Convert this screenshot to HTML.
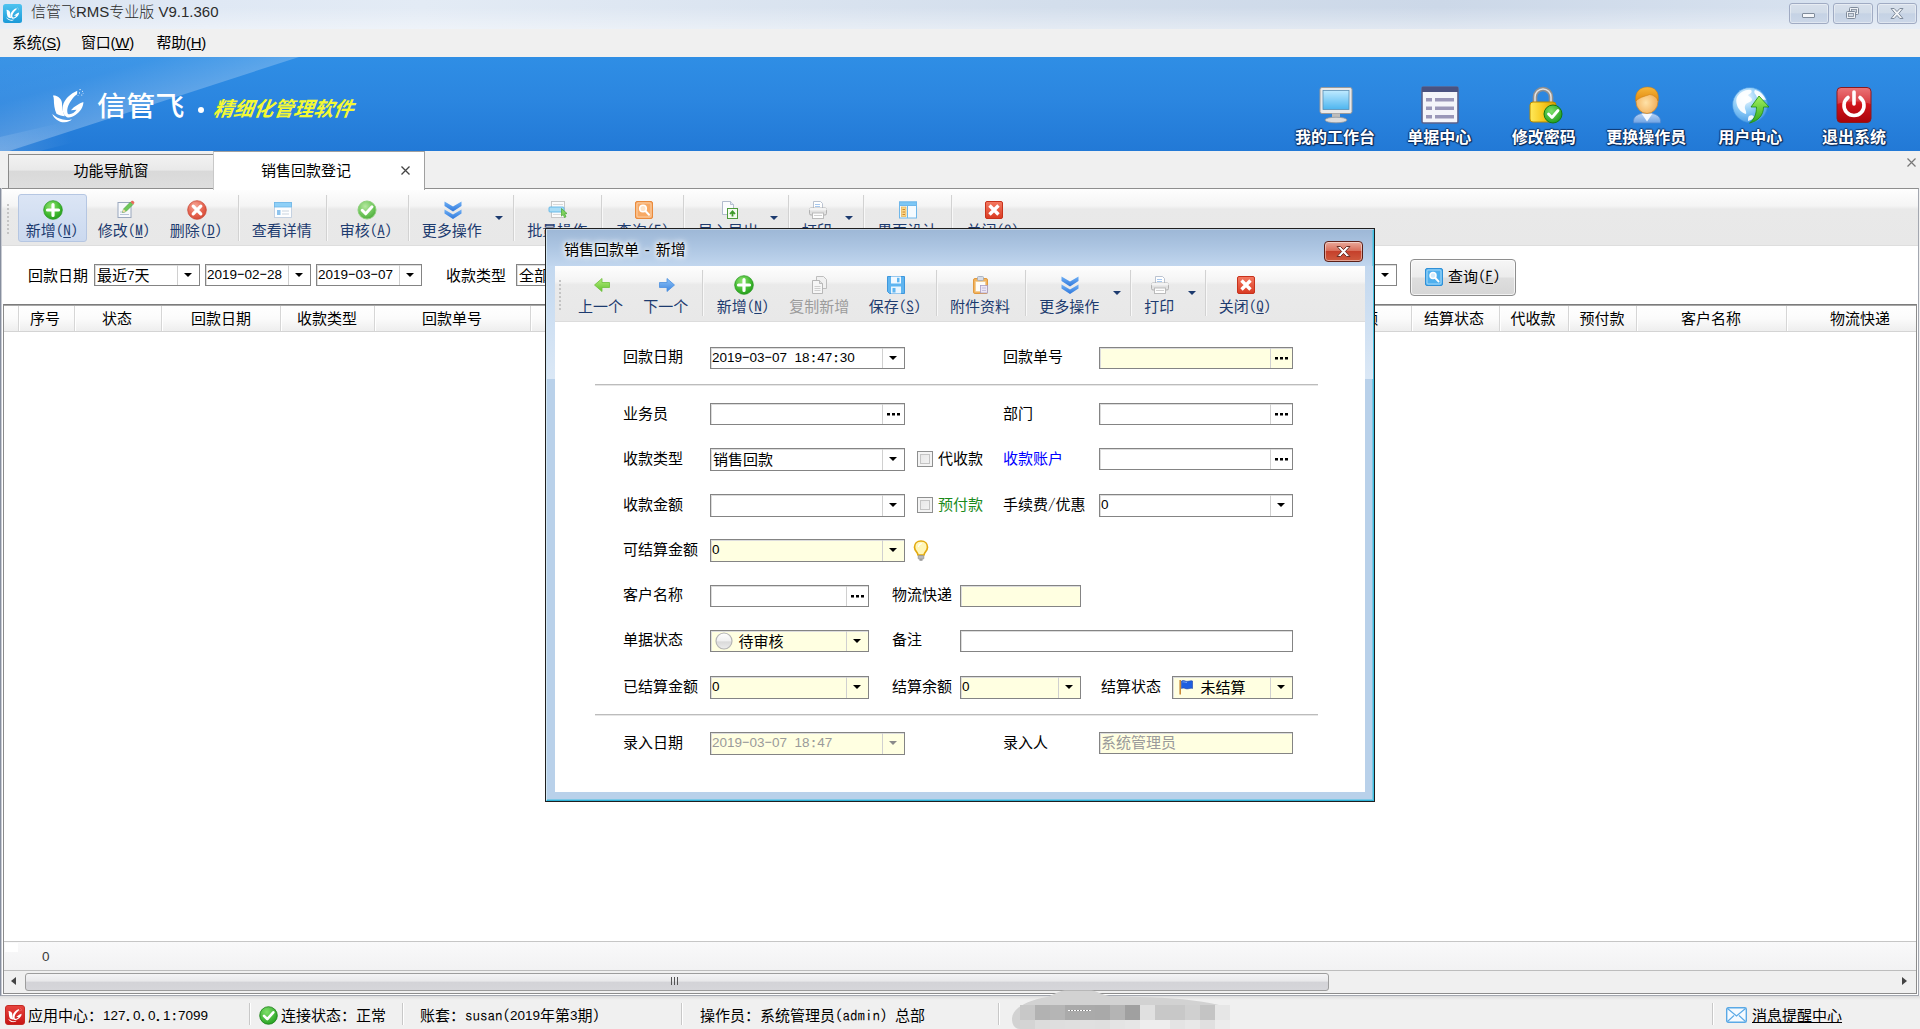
<!DOCTYPE html>
<html lang="zh-CN"><head><meta charset="utf-8"><title>信管飞RMS专业版 V9.1.360</title>
<style>
*{box-sizing:border-box;margin:0;padding:0}
html,body{width:1920px;height:1029px;overflow:hidden;background:#f0f0f0}
body{position:relative;font-family:"Liberation Sans","Noto Sans CJK SC",sans-serif;font-size:15px;color:#000;line-height:1}
.abs,.abs-c>*{position:absolute}
div,span.p,svg.p{position:absolute}
.a{font-family:"IPAGothic","Liberation Mono",monospace;font-size:15px;letter-spacing:0;position:static}
.d{font-family:"Liberation Sans",sans-serif;font-size:13.5px;position:relative;top:-1px}
.lbl{white-space:nowrap;height:20px;line-height:20px;font-size:15px}
.cj{position:relative;top:1px}
.c{text-align:center}
.tb{color:#1d3b6f}
.sep{width:1px;background:#d2d2d2;border-right:1px solid #f8f8f8;box-sizing:content-box}
.fld{border:1px solid #848484;background:#fff;height:22px;box-shadow:inset 1px 1px 0 #dcdcdc}
.fld.y{background:#ffffe1}
.fld .v{left:2px;top:0;height:20px;line-height:20.5px;white-space:nowrap;font-size:15px}
.fld .v>.a:first-child{margin-left:-1px}
.fld .btn{right:0;top:0;width:22px;height:20px;border-left:1px solid #d0d0d0}
.arr{width:0;height:0;border-left:4px solid transparent;border-right:4px solid transparent;border-top:4px solid #000}
.dots{font-weight:bold;font-size:14px;letter-spacing:0;line-height:14px;text-align:center;width:100%;top:1px;left:0}
.hc{top:0;height:27px;line-height:27px;text-align:center;font-size:15px;white-space:nowrap}
.hs{top:1px;width:1px;height:25px;background:#d6d6d6;border-right:1px solid #fff;box-sizing:content-box}
.st{top:1006.5px;height:18px;line-height:18px;white-space:nowrap;font-size:15px}
.ss{top:1003px;width:1px;height:22px;background:#c8c8c8;border-right:1px solid #fff;box-sizing:content-box}
.bl{top:128px;height:20px;line-height:20px;text-align:center;font-weight:bold;font-size:16px;color:#fff;white-space:nowrap;text-shadow:1px 1px 1px #0a2a5a,-1px 0 1px #12386e,0 -1px 1px #12386e,1px 0 1px #0a2a5a,0 1px 1px #0a2a5a}
</style></head>
<body>
<div style="left:0;top:0;width:1920px;height:29px;background:linear-gradient(90deg,#dbe5f3 0%,#e3ebf5 22%,#d3deec 55%,#ccd8e8 75%,#dae4f1 100%)"></div>
<div style="left:0;top:0;width:1920px;height:29px;background:linear-gradient(180deg,rgba(255,255,255,0) 25%,rgba(255,255,255,.4) 100%)"></div>
<svg class="p" style="left:3px;top:4px" width="20" height="20" viewBox="0 0 20 20"><defs><linearGradient id="ai" x1="0" y1="0" x2="0" y2="1"><stop offset="0" stop-color="#4fc3f0"/><stop offset="1" stop-color="#1a9ad8"/></linearGradient></defs><rect x="0" y="0" width="19" height="19" rx="2.5" fill="url(#ai)"/><svg x="3" y="2.500" width="13.500" height="14.500" viewBox="130 95 345 385" preserveAspectRatio="none"><g fill="#fff"><path d="M140 185C175 180 225 205 235 255c5 45 3 95 33 153-28-3-63-13-90-28-23-50-28-110-28-145 0-20-4-37-10-50z"/><path d="M400 135C330 165 262 225 246 295c-8 50 4 100 44 123 50 14 115-33 150-83 18-30 26-57 25-80-45 17-93 43-133 87l60-4c-22 34-62 54-92 44-18-37 0-97 35-144 17-26 37-48 63-66z"/><path d="M133 382c17 48 67 88 129 90 38-2 66-17 80-34-42 14-92 12-132-6-30-14-55-30-77-50z"/><circle cx="430" cy="122" r="7"/><circle cx="456" cy="140" r="6"/><circle cx="424" cy="158" r="6"/><circle cx="448" cy="180" r="6"/><circle cx="462" cy="162" r="5"/><circle cx="408" cy="186" r="5"/></g></svg></svg>
<div style="left:31px;top:2px;height:20px;line-height:20px;font-size:15px;color:#2b2b2b;font-weight:300;white-space:nowrap">信管飞RMS专业版 V9.1.360</div>
<div style="left:1789px;top:3px;width:40px;height:21px;border:1px solid #a0abc3;border-radius:3px;background:linear-gradient(180deg,#d8e0eb 0%,#d1dbe8 46%,#c5d2e4 52%,#cbd7e8 100%);box-shadow:inset 0 0 0 1px rgba(255,255,255,.4)"></div>
<div style="left:1833px;top:3px;width:40px;height:21px;border:1px solid #a0abc3;border-radius:3px;background:linear-gradient(180deg,#d8e0eb 0%,#d1dbe8 46%,#c5d2e4 52%,#cbd7e8 100%);box-shadow:inset 0 0 0 1px rgba(255,255,255,.4)"></div>
<div style="left:1877px;top:3px;width:40px;height:21px;border:1px solid #a0abc3;border-radius:3px;background:linear-gradient(180deg,#d8e0eb 0%,#d1dbe8 46%,#c5d2e4 52%,#cbd7e8 100%);box-shadow:inset 0 0 0 1px rgba(255,255,255,.4)"></div>
<div style="left:1802px;top:13px;width:13px;height:5px;border:1px solid #7f8b9b;border-radius:1px;background:#f4f6f9"></div>
<svg class="p" style="left:1844px;top:6px" width="18" height="15" viewBox="0 0 18 15"><rect x="5.500" y="1.500" width="9" height="7" rx="1" fill="#eef1f5" stroke="#7f8b9b"/><rect x="7.500" y="3.500" width="5" height="3" fill="#cdd6e1" stroke="#7f8b9b" stroke-width=".8"/><rect x="2.500" y="5.500" width="9" height="7" rx="1" fill="#eef1f5" stroke="#7f8b9b"/><rect x="4.500" y="7.500" width="5" height="3" fill="#cdd6e1" stroke="#7f8b9b" stroke-width=".8"/></svg>
<svg class="p" style="left:1889px;top:7px" width="16" height="13" viewBox="0 0 16 13"><path d="M2 1.500h3.200L8 4.600l2.800-3.100H14L9.800 6.500 14 11.500h-3.200L8 8.400l-2.800 3.100H2l4.200-5z" fill="#f2f4f7" stroke="#7f8b9b" stroke-width="1" stroke-linejoin="round"/></svg>
<div style="left:0;top:29px;width:1920px;height:28px;background:#f0f0f0"></div>
<div style="left:12.0px;top:33px;height:20px;line-height:20px;font-size:15px;letter-spacing:-.25px;white-space:nowrap;color:#000">系统(<u>S</u>)</div>
<div style="left:81.0px;top:33px;height:20px;line-height:20px;font-size:15px;letter-spacing:-.25px;white-space:nowrap;color:#000">窗口(<u>W</u>)</div>
<div style="left:156.5px;top:33px;height:20px;line-height:20px;font-size:15px;letter-spacing:-.25px;white-space:nowrap;color:#000">帮助(<u>H</u>)</div>
<div style="left:0;top:57px;width:1920px;height:94px;background:linear-gradient(180deg,#2f8ee5 0%,#2b86e0 45%,#2279d6 100%)"></div>
<svg class="p" style="left:0;top:57px" width="700" height="94" viewBox="0 0 700 94"><defs><linearGradient id="bg1" gradientUnits="userSpaceOnUse" x1="0" y1="0" x2="25" y2="86"><stop offset="0" stop-color="#fff" stop-opacity=".05"/><stop offset=".5" stop-color="#fff" stop-opacity=".07"/><stop offset="1" stop-color="#fff" stop-opacity=".25"/></linearGradient><linearGradient id="bg2" gradientUnits="userSpaceOnUse" x1="0" y1="94" x2="60" y2="60"><stop offset="0" stop-color="#fff" stop-opacity=".14"/><stop offset="1" stop-color="#fff" stop-opacity="0"/></linearGradient></defs><polygon points="0,0 299,0 0,97" fill="url(#bg1)"/><polygon points="0,94 0,80 130,50 250,40 40,94" fill="url(#bg2)"/></svg>
<svg class="p" style="left:52.2px;top:86.9px" width="32.300" height="36.100" viewBox="130 95 345 385" preserveAspectRatio="none"><g fill="#fff"><path d="M140 185C175 180 225 205 235 255c5 45 3 95 33 153-28-3-63-13-90-28-23-50-28-110-28-145 0-20-4-37-10-50z"/><path d="M400 135C330 165 262 225 246 295c-8 50 4 100 44 123 50 14 115-33 150-83 18-30 26-57 25-80-45 17-93 43-133 87l60-4c-22 34-62 54-92 44-18-37 0-97 35-144 17-26 37-48 63-66z"/><path d="M133 382c17 48 67 88 129 90 38-2 66-17 80-34-42 14-92 12-132-6-30-14-55-30-77-50z"/><circle cx="430" cy="122" r="7"/><circle cx="456" cy="140" r="6"/><circle cx="424" cy="158" r="6"/><circle cx="448" cy="180" r="6"/><circle cx="462" cy="162" r="5"/><circle cx="408" cy="186" r="5"/></g></svg>
<div style="left:97px;top:92px;height:30px;line-height:30px;font-size:27px;color:#fff;white-space:nowrap;font-weight:500;letter-spacing:0;transform:scaleX(1.08);transform-origin:left center;font-family:'Liberation Sans','Noto Sans CJK SC',sans-serif">信管飞</div>
<div style="left:197.5px;top:107px;width:6px;height:6px;border-radius:3px;background:#fff"></div>
<div style="left:212px;top:96px;height:26px;line-height:26px;font-size:20px;font-weight:bold;font-style:italic;color:#f4f933;white-space:nowrap;transform:skewX(-8deg);transform-origin:left bottom;letter-spacing:0">精细化管理软件</div>
<div class="bl" style="left:1275.0px;width:120px">我的工作台</div>
<div class="bl" style="left:1379.3px;width:120px">单据中心</div>
<div class="bl" style="left:1483.8px;width:120px">修改密码</div>
<div class="bl" style="left:1586.2px;width:120px">更换操作员</div>
<div class="bl" style="left:1690.2px;width:120px">用户中心</div>
<div class="bl" style="left:1794.0px;width:120px">退出系统</div>
<svg class="p" style="left:1316.7px;top:86px" width="38" height="38" viewBox="0 0 38 38"><defs><linearGradient id="m1" x1="0" y1="0" x2="0" y2="1"><stop offset="0" stop-color="#bfeaff"/><stop offset="1" stop-color="#4db5ef"/></linearGradient></defs><rect x="3" y="1.500" width="32" height="26" rx="2" fill="#e9e9e9" stroke="#9a9a9a"/><rect x="6" y="4.500" width="26" height="19" fill="url(#m1)" stroke="#5a8fb5" stroke-width=".8"/><rect x="15" y="27.500" width="8" height="4" fill="#bdbdbd"/><ellipse cx="19" cy="34" rx="11" ry="2.800" fill="#dcdcdc" stroke="#9a9a9a" stroke-width=".8"/></svg>
<svg class="p" style="left:1421.0px;top:86px" width="38" height="38" viewBox="0 0 38 38"><rect x="1" y="1" width="36" height="36" rx="1.500" fill="#f4f5fa" stroke="#5b628c" stroke-width="1.600"/><rect x="1" y="1" width="36" height="5" fill="#4a5280"/><g fill="#9a97b8"><rect x="5" y="12" width="6" height="3.500"/><rect x="14" y="12" width="19" height="3.500"/><rect x="5" y="20.500" width="6" height="3.500"/><rect x="14" y="20.500" width="19" height="3.500"/><rect x="5" y="29" width="6" height="3.500"/><rect x="14" y="29" width="19" height="3.500"/></g></svg>
<svg class="p" style="left:1526.0px;top:86px" width="38" height="38" viewBox="0 0 38 38"><defs><linearGradient id="l1" x1="0" y1="0" x2="1" y2="0"><stop offset="0" stop-color="#ffe95a"/><stop offset=".5" stop-color="#f6c91f"/><stop offset="1" stop-color="#d99a00"/></linearGradient><radialGradient id="l2" cx=".4" cy=".35" r=".7"><stop offset="0" stop-color="#7be06a"/><stop offset="1" stop-color="#1c9a1a"/></radialGradient></defs><path d="M9 18V11a8 8 0 0 1 16 0v7" fill="none" stroke="#8f8f8f" stroke-width="4.600"/><path d="M9 18V11a8 8 0 0 1 16 0v7" fill="none" stroke="#e3e3e3" stroke-width="1.500"/><rect x="4" y="16" width="26" height="20" rx="3" fill="url(#l1)" stroke="#b98a00"/><circle cx="27" cy="28" r="9" fill="url(#l2)" stroke="#147a12"/><path d="M22.500 28l3.500 3.500 6-7" fill="none" stroke="#fff" stroke-width="2.800" stroke-linecap="round" stroke-linejoin="round"/></svg>
<svg class="p" style="left:1627.7px;top:86px" width="38" height="38" viewBox="0 0 38 38"><defs><radialGradient id="u1" cx=".45" cy=".55" r=".65"><stop offset="0" stop-color="#ffe2a8"/><stop offset="1" stop-color="#f0a54a"/></radialGradient><linearGradient id="u2" x1="0" y1="0" x2="0" y2="1"><stop offset="0" stop-color="#b9d4f5"/><stop offset="1" stop-color="#6fa3e4"/></linearGradient><linearGradient id="u3" x1="0" y1="0" x2="0" y2="1"><stop offset="0" stop-color="#f7b63a"/><stop offset="1" stop-color="#e18a10"/></linearGradient></defs><path d="M5.500 37c-1-7 5-10 13.500-10s14.500 3 13.500 10z" fill="url(#u2)" stroke="#4f86cf" stroke-width=".8"/><path d="M13.500 27.500l5.500 8 5.500-8z" fill="#f6f9fe"/><ellipse cx="19" cy="15.500" rx="11" ry="12" fill="url(#u1)" stroke="#c9862f" stroke-width=".8"/><path d="M7.800 15C6.500 6 12 1 19.500 1 27 1 31.500 6 30.200 15c-1.500-3.500-4-6-8.500-6.500-3 1.500-9 2-13.900 6.500z" fill="url(#u3)" stroke="#c97a10" stroke-width=".5"/></svg>
<svg class="p" style="left:1731.7px;top:86px" width="38" height="38" viewBox="0 0 38 38"><defs><radialGradient id="g1" cx=".38" cy=".3" r=".85"><stop offset="0" stop-color="#f2faff"/><stop offset=".45" stop-color="#8ccbf7"/><stop offset="1" stop-color="#2f8ae0"/></radialGradient><linearGradient id="g2" x1="0" y1="0" x2="0" y2="1"><stop offset="0" stop-color="#a4f25f"/><stop offset="1" stop-color="#2ea81c"/></linearGradient></defs><circle cx="18" cy="19" r="17.500" fill="url(#g1)" stroke="#3b8ede" stroke-width=".6"/><path d="M5 11c3-5 9-8 14-7 2 2-1 4-3 5 1 2 4 2 4 5-2 3-6 2-7 6-1 3 2 5 1 8-4-1-8-5-9-9-1-3-1-6 0-8zM23 4c5 1 9 5 11 10-3-1-5 1-8-1-2-2-1-4-3-5-1-2-1-3 0-4zM17 30c2-1 4-1 5 1-1 2-3 3-6 4 0-2 0-4 1-5z" fill="#fff" opacity=".92"/><path d="M27 10l10 11h-5.500c0 8-5 14-14 16 5-4 7-9 7-16H19z" fill="url(#g2)" stroke="#1d8a12" stroke-width=".8" stroke-linejoin="round"/></svg>
<svg class="p" style="left:1835.3px;top:86px" width="38" height="38" viewBox="0 0 38 38"><defs><linearGradient id="p1" x1="0" y1="0" x2="0" y2="1"><stop offset="0" stop-color="#e85a5e"/><stop offset=".5" stop-color="#cf1219"/><stop offset="1" stop-color="#a9030b"/></linearGradient></defs><rect x="2" y="1.500" width="34" height="35" rx="4" fill="url(#p1)" stroke="#8a1a1e"/><path d="M2.500 18C9 14.500 29 14.500 35.500 18V6a4 4 0 0 0-4-4h-25a4 4 0 0 0-4 4z" fill="#fff" opacity=".16"/><path d="M13 11.500a10 10 0 1 0 12 0" fill="none" stroke="#fff" stroke-width="3.600" stroke-linecap="round"/><path d="M19 6v12" stroke="#fff" stroke-width="3.600" stroke-linecap="round"/></svg>
<div style="left:0;top:151px;width:1920px;height:38px;background:#f0f0f0"></div>
<div style="left:8px;top:154px;width:206px;height:34px;border:1px solid #8a8a8a;border-bottom:none;background:linear-gradient(180deg,#f2f2f2 0%,#e9e9e9 45%,#d9d9d9 50%,#dedede 100%)"></div>
<div class="lbl c" style="left:8px;top:161px;width:206px">功能导航窗</div>
<div style="left:213px;top:151px;width:212px;height:39px;border:1px solid #a0a0a0;border-bottom:none;border-left-color:#c8c8c8;background:#fff;z-index:2"></div>
<div class="lbl c" style="left:213px;top:161px;width:186px;z-index:3">销售回款登记</div>
<svg class="p" style="left:400px;top:165px;z-index:3" width="11" height="11" viewBox="0 0 11 11"><path d="M1.500 1.500l8 8M9.500 1.500l-8 8" stroke="#444" stroke-width="1.300"/></svg>
<svg class="p" style="left:1906px;top:157px" width="11" height="11" viewBox="0 0 11 11"><path d="M1.500 1.500l8 8M9.500 1.500l-8 8" stroke="#777" stroke-width="1.200"/></svg>
<div style="left:0;top:188px;width:1919px;height:808px;border:1px solid #a3a7b0;border-top-color:#8e8e8e;border-left:1px solid #868e9e;background:#fff"></div>
<div style="left:1px;top:188px;width:1px;height:807px;background:#c9ccd3"></div>
<div style="left:2px;top:189px;width:1916px;height:57px;background:linear-gradient(180deg,#fefefe 0%,#f5f5f5 30%,#e9e9e9 36%,#e8e8e8 100%);border-bottom:1px solid #dedede"></div>
<div style="left:7px;top:204px;width:2px;height:30px;background:repeating-linear-gradient(180deg,#c4c4c4 0,#c4c4c4 2px,transparent 2px,transparent 4px)"></div>
<div style="left:18px;top:194px;width:69px;height:48px;border:1px solid #b5c6e2;border-radius:3px;background:linear-gradient(180deg,#dbe5f5 0%,#cbd9ef 100%)"></div>
<svg class="p" style="left:43.0px;top:200.0px" width="20" height="20" viewBox="0 0 20 20"><defs><radialGradient id="ga1" cx=".4" cy=".3" r=".8"><stop offset="0" stop-color="#8fe36f"/><stop offset=".6" stop-color="#3fb82f"/><stop offset="1" stop-color="#1f9418"/></radialGradient></defs><circle cx="10" cy="10" r="9.300" fill="url(#ga1)" stroke="#2a9a22" stroke-width=".8"/><path d="M10 4.500v11M4.500 10h11" stroke="#fff" stroke-width="3.200" stroke-linecap="round"/></svg><div class="lbl c" style="left:7.0px;top:220.7px;width:90px;color:#1d3b6f">新增<span class="a">(</span><u><span class="a">N</span></u><span class="a">)</span></div>
<svg class="p" style="left:115.0px;top:200.0px" width="20" height="20" viewBox="0 0 20 20"><rect x="3" y="2.500" width="13" height="15" fill="#f7f9fc" stroke="#9aa7bd"/><path d="M5 14.500h9M5 12h5" stroke="#b8c4d6" stroke-width="1"/><path d="M7.500 12.500l1-3.500 7-7 2.500 2.500-7 7z" fill="#6fc85a" stroke="#4a9a3c" stroke-width=".6"/><path d="M15.500 2l2.500 2.500 1-1c.5-.5.5-1.200 0-1.700l-.8-.8c-.5-.5-1.200-.5-1.700 0z" fill="#e86a5a"/><path d="M7.500 12.500l1-3.500 2.500 2.500z" fill="#f3d9a8"/></svg><div class="lbl c" style="left:79.0px;top:220.7px;width:90px;color:#1d3b6f">修改<span class="a">(</span><u><span class="a">M</span></u><span class="a">)</span></div>
<svg class="p" style="left:187.0px;top:200.0px" width="20" height="20" viewBox="0 0 20 20"><defs><radialGradient id="gd2" cx=".4" cy=".3" r=".8"><stop offset="0" stop-color="#f7aa9a"/><stop offset=".6" stop-color="#e4604c"/><stop offset="1" stop-color="#cf4430"/></radialGradient></defs><circle cx="10" cy="10" r="9.300" fill="url(#gd2)" stroke="#c84a38" stroke-width=".8"/><path d="M6.200 6.200l7.600 7.600M13.800 6.200l-7.600 7.600" stroke="#fff" stroke-width="3.200" stroke-linecap="round"/></svg><div class="lbl c" style="left:151.0px;top:220.7px;width:90px;color:#1d3b6f">删除<span class="a">(</span><u><span class="a">D</span></u><span class="a">)</span></div>
<svg class="p" style="left:272.7px;top:200.0px" width="20" height="20" viewBox="0 0 20 20"><rect x="1.500" y="2.500" width="17" height="15" fill="#fdfeff" stroke="#b9c9dc" stroke-width=".8"/><rect x="1.500" y="2.500" width="17" height="4.500" fill="#8fd0f7" stroke="#6bb6e8" stroke-width=".8"/><rect x="4" y="10" width="3.500" height="5" fill="#8fc4ee"/><path d="M9 11h7M9 14h7" stroke="#c9d3df" stroke-width="1.200"/></svg><div class="lbl c" style="left:236.7px;top:220.7px;width:90px;color:#1d3b6f">查看详情</div>
<svg class="p" style="left:357.0px;top:200.0px" width="20" height="20" viewBox="0 0 20 20"><defs><radialGradient id="gc3" cx=".4" cy=".3" r=".8"><stop offset="0" stop-color="#b5e8a0"/><stop offset=".6" stop-color="#6cc458"/><stop offset="1" stop-color="#45a535"/></radialGradient></defs><circle cx="10" cy="10" r="9" fill="url(#gc3)" stroke="#8fd07c" stroke-width="1"/><path d="M5.200 10.300l3.500 3.500 6.300-7" fill="none" stroke="#fff" stroke-width="3" stroke-linecap="round" stroke-linejoin="round"/></svg><div class="lbl c" style="left:321.0px;top:220.7px;width:90px;color:#1d3b6f">审核<span class="a">(</span><u><span class="a">A</span></u><span class="a">)</span></div>
<svg class="p" style="left:442.7px;top:200.0px" width="20" height="20" viewBox="0 0 20 20"><defs><linearGradient id="gm4" x1="0" y1="0" x2="0" y2="1"><stop offset="0" stop-color="#6fb0f5"/><stop offset="1" stop-color="#2f78dc"/></linearGradient></defs><path d="M1.500 1.500l8.500 5 8.500-5v4.500l-8.500 5.500-8.500-5.500z" fill="url(#gm4)"/><path d="M1.500 9.500l8.500 5 8.500-5v4l-8.500 5.500-8.500-5.500z" fill="url(#gm4)"/></svg><div class="lbl c" style="left:406.7px;top:220.7px;width:90px;color:#1d3b6f">更多操作</div>
<svg class="p" style="left:548.3px;top:200.0px" width="20" height="20" viewBox="0 0 20 20"><rect x="3.500" y="1.500" width="13" height="16" fill="#fbfbfb" stroke="#c3c3c3" stroke-width=".9"/><rect x="1" y="7" width="15" height="5" rx="1" fill="#a9dcf6" stroke="#5fb4e6" stroke-width=".9"/><path d="M5 4.500h10M5 14.500h8" stroke="#d9d9d9" stroke-width="1"/><path d="M13.500 8.500l5.500 5-2.300.3 1.300 3-1.500.7-1.300-3-1.700 1.600z" fill="#7fd35e" stroke="#45a52f" stroke-width=".7" stroke-linejoin="round"/></svg><div class="lbl c" style="left:512.3px;top:220.7px;width:90px;color:#1d3b6f">批量操作</div>
<svg class="p" style="left:633.7px;top:200.0px" width="20" height="20" viewBox="0 0 20 20"><rect x="1.500" y="1.500" width="17" height="17" rx="1.500" fill="#f7a965" stroke="#e98a3c"/><rect x="3" y="3" width="14" height="14" rx="1" fill="none" stroke="#fbd0a8" stroke-width="1"/><circle cx="9" cy="8.500" r="3.300" fill="#fde3c9" stroke="#fff" stroke-width="1.500"/><path d="M11.500 11l3.500 3.700" stroke="#fff" stroke-width="2" stroke-linecap="round"/></svg><div class="lbl c" style="left:597.7px;top:220.7px;width:90px;color:#1d3b6f">查询<span class="a">(</span><u><span class="a">F</span></u><span class="a">)</span></div>
<svg class="p" style="left:719.3px;top:200.0px" width="20" height="20" viewBox="0 0 20 20"><path d="M3.500 1.500h8l3 3v10h-11z" fill="#fbfcfe" stroke="#a9b4c8" stroke-width=".9"/><path d="M11.500 1.500v3h3" fill="#e4e9f1" stroke="#a9b4c8" stroke-width=".8"/><rect x="8.500" y="8.500" width="10" height="10" fill="#f4fbf0" stroke="#4e9a3a" stroke-width="1"/><path d="M13.500 16.500v-4.500M11 14l2.500-2.700 2.500 2.700" fill="none" stroke="#3f9a2b" stroke-width="1.800"/></svg><div class="lbl c" style="left:683.3px;top:220.7px;width:90px;color:#1d3b6f">导入导出</div>
<svg class="p" style="left:807.7px;top:200.0px" width="20" height="20" viewBox="0 0 20 20"><path d="M5.500 1.500h7l2 2v5h-9z" fill="#fff" stroke="#b3bccb" stroke-width=".9"/><path d="M7 4.500h5M7 6.500h5" stroke="#a8c8ee" stroke-width="1"/><rect x="1.500" y="8" width="17" height="7" rx="1.500" fill="#e1e1e1" stroke="#aaa" stroke-width=".9"/><rect x="1.500" y="8" width="17" height="2.500" rx="1.200" fill="#f3f3f3"/><rect x="4.500" y="13" width="11" height="5.500" fill="#fdfdfd" stroke="#b5b5b5" stroke-width=".9"/><path d="M6 15.500h8" stroke="#d0d0d0" stroke-width="1"/></svg><div class="lbl c" style="left:771.7px;top:220.7px;width:90px;color:#1d3b6f">打印</div>
<svg class="p" style="left:898.3px;top:200.0px" width="20" height="20" viewBox="0 0 20 20"><rect x="1.500" y="2" width="17" height="16" fill="#f5fbff" stroke="#6fb7ea" stroke-width="1"/><rect x="1.500" y="2" width="17" height="3.500" fill="#7cc7f5" stroke="#6fb7ea" stroke-width="1"/><rect x="3.500" y="7" width="4.500" height="9.500" fill="#f9d58a" stroke="#e6b450" stroke-width=".7"/><path d="M4.500 9.500h2.500M4.500 12h2.500M4.500 14.500h2.500" stroke="#d08a2a" stroke-width="1"/><path d="M9.500 5.500v12.500" stroke="#6fb7ea" stroke-width="1"/></svg><div class="lbl c" style="left:862.3px;top:220.7px;width:90px;color:#1d3b6f">界面设计</div>
<svg class="p" style="left:983.7px;top:200.0px" width="20" height="20" viewBox="0 0 20 20"><defs><linearGradient id="gx5" x1="0" y1="0" x2="0" y2="1"><stop offset="0" stop-color="#f47a62"/><stop offset="1" stop-color="#d93a22"/></linearGradient></defs><rect x="1.500" y="1.500" width="17" height="17" rx="1.500" fill="url(#gx5)" stroke="#c7321c"/><path d="M5.500 5.500l9 9M14.500 5.500l-9 9" stroke="#fff" stroke-width="3.400" stroke-linecap="butt"/></svg><div class="lbl c" style="left:947.7px;top:220.7px;width:90px;color:#1d3b6f">关闭<span class="a">(</span><u><span class="a">Q</span></u><span class="a">)</span></div>
<div class="sep" style="left:238px;top:195px;height:46px"></div>
<div class="sep" style="left:326px;top:195px;height:46px"></div>
<div class="sep" style="left:408px;top:195px;height:46px"></div>
<div class="sep" style="left:513px;top:195px;height:46px"></div>
<div class="sep" style="left:601px;top:195px;height:46px"></div>
<div class="sep" style="left:683px;top:195px;height:46px"></div>
<div class="sep" style="left:788px;top:195px;height:46px"></div>
<div class="sep" style="left:863px;top:195px;height:46px"></div>
<div class="sep" style="left:951px;top:195px;height:46px"></div>
<div class="arr" style="left:495px;top:216px;border-top-color:#1d3b6f"></div>
<div class="arr" style="left:770px;top:216px;border-top-color:#1d3b6f"></div>
<div class="arr" style="left:845px;top:216px;border-top-color:#1d3b6f"></div>
<div class="lbl" style="left:28px;top:265.5px">回款日期</div>
<div class="fld" style="left:94.0px;top:264.0px;width:106.0px;height:22px"><div class="v" style=""><span class="cj">最近<span class="a"><span class="d">7</span></span>天</span></div><div class="btn" style="height:20px"><div class="arr" style="left:6px;top:8px;border-top-color:#000"></div></div></div>
<div class="fld" style="left:205.0px;top:264.0px;width:106.0px;height:22px"><div class="v" style=""><span class="a"><span class="d">2019</span>-<span class="d">02</span>-<span class="d">28</span></span></div><div class="btn" style="height:20px"><div class="arr" style="left:6px;top:8px;border-top-color:#000"></div></div></div>
<div class="fld" style="left:316.0px;top:264.0px;width:106.0px;height:22px"><div class="v" style=""><span class="a"><span class="d">2019</span>-<span class="d">03</span>-<span class="d">07</span></span></div><div class="btn" style="height:20px"><div class="arr" style="left:6px;top:8px;border-top-color:#000"></div></div></div>
<div class="lbl" style="left:446px;top:265.5px">收款类型</div>
<div class="fld" style="left:516.0px;top:264.0px;width:881.0px;height:22px"><div class="v" style=""><span class="cj">全部</span></div><div class="btn" style="height:20px"><div class="arr" style="left:6px;top:8px;border-top-color:#000"></div></div></div>
<div style="left:1410px;top:259px;width:106px;height:37px;border:1px solid #8e8e8e;border-radius:4px;background:linear-gradient(180deg,#f6f6f6 0%,#ececec 48%,#dedede 52%,#d6d6d6 100%);box-shadow:inset 0 0 0 1px rgba(255,255,255,.7)"></div>
<svg class="p" style="left:1425px;top:268px" width="18" height="18" viewBox="0 0 18 18"><rect x=".5" y=".5" width="17" height="17" rx="1.500" fill="#4fb0ee" stroke="#2f8fd6"/><rect x="2" y="2" width="14" height="14" rx="1" fill="none" stroke="#a8d9f8" stroke-width="1"/><circle cx="8" cy="7.500" r="3" fill="#d4ecfb" stroke="#fff" stroke-width="1.500"/><path d="M10.300 10l3.200 3.400" stroke="#fff" stroke-width="2" stroke-linecap="round"/></svg>
<div class="lbl" style="left:1448px;top:267px">查询<span class="a">(</span><u><span class="a">F</span></u><span class="a">)</span></div>
<div style="left:3px;top:304px;width:1914px;height:690px;border:1px solid #8c8c8c;border-top:1px solid #7c7c7c;background:#fff"></div>
<div style="left:4px;top:305px;width:1912px;height:27px;border-top:1px solid #a8a8a8;border-bottom:1px solid #d4d4d4;background:linear-gradient(180deg,#ffffff 0%,#fbfbfb 50%,#eeeeee 100%)"></div>
<div style="left:2px;top:305px;width:1914px;height:28px">
<div class="hc" style="left:-7px;width:100px">序号</div>
<div class="hc" style="left:65px;width:100px">状态</div>
<div class="hc" style="left:169px;width:100px">回款日期</div>
<div class="hc" style="left:275px;width:100px">收款类型</div>
<div class="hc" style="left:400px;width:100px">回款单号</div>
<div class="hc" style="left:1402px;width:100px">结算状态</div>
<div class="hc" style="left:1481px;width:100px">代收款</div>
<div class="hc" style="left:1550px;width:100px">预付款</div>
<div class="hc" style="left:1659px;width:100px">客户名称</div>
<div class="hc" style="left:1808px;width:100px">物流快递</div>
<div class="hc" style="left:1311px;width:100px">余额</div>
<div class="hs" style="left:16px"></div>
<div class="hs" style="left:72px"></div>
<div class="hs" style="left:159px"></div>
<div class="hs" style="left:278px"></div>
<div class="hs" style="left:372px"></div>
<div class="hs" style="left:528px"></div>
<div class="hs" style="left:1409px"></div>
<div class="hs" style="left:1497px"></div>
<div class="hs" style="left:1566px"></div>
<div class="hs" style="left:1634px"></div>
<div class="hs" style="left:1784px"></div>
</div>
<div style="left:4px;top:941px;width:1912px;height:30px;border-top:1px solid #c6c6c6;border-bottom:1px solid #bdbdbd;background:linear-gradient(180deg,#f9f9fa,#f2f2f3)"></div>
<div style="left:5px;top:943px;width:13px;height:9px;background:#fff"></div>
<div class="lbl" style="left:42px;top:946.500px;color:#3a3a3a;font-size:14px"><span class="a"><span class="d">0</span></span></div>
<div style="left:4px;top:971px;width:1912px;height:22px;background:#f0f0f0"></div>
<div style="left:25px;top:973px;width:1304px;height:18px;border:1px solid #9d9d9d;border-radius:3px;background:linear-gradient(180deg,#f4f4f5 0%,#e8e8ea 45%,#d3d3d7 50%,#d6d6da 100%)"></div>
<div style="left:671px;top:977px;width:9px;height:8px;background:repeating-linear-gradient(90deg,#555 0,#555 1px,transparent 1px,transparent 3px)"></div>
<div style="left:11px;top:977px;width:0;height:0;border-top:4.500px solid transparent;border-bottom:4.500px solid transparent;border-right:5px solid #444"></div>
<div style="left:1902px;top:977px;width:0;height:0;border-top:4.500px solid transparent;border-bottom:4.500px solid transparent;border-left:5px solid #444"></div>
<div style="left:0;top:996px;width:1920px;height:33px;background:linear-gradient(180deg,#dcdcdc 0,#f0f0f0 4px,#f0f0f0 100%)"></div>
<svg class="p" style="left:5px;top:1005px" width="20" height="20" viewBox="0 0 20 20"><defs><linearGradient id="si" x1="0" y1="0" x2="0" y2="1"><stop offset="0" stop-color="#e8453f"/><stop offset="1" stop-color="#c81414"/></linearGradient></defs><rect x=".5" y=".5" width="19" height="19" rx="2.500" fill="url(#si)" stroke="#c42a24"/><svg x="3" y="2.500" width="14" height="15" viewBox="130 95 345 385" preserveAspectRatio="none"><g fill="#fff"><path d="M140 185C175 180 225 205 235 255c5 45 3 95 33 153-28-3-63-13-90-28-23-50-28-110-28-145 0-20-4-37-10-50z"/><path d="M400 135C330 165 262 225 246 295c-8 50 4 100 44 123 50 14 115-33 150-83 18-30 26-57 25-80-45 17-93 43-133 87l60-4c-22 34-62 54-92 44-18-37 0-97 35-144 17-26 37-48 63-66z"/><path d="M133 382c17 48 67 88 129 90 38-2 66-17 80-34-42 14-92 12-132-6-30-14-55-30-77-50z"/><circle cx="430" cy="122" r="7"/><circle cx="456" cy="140" r="6"/><circle cx="424" cy="158" r="6"/><circle cx="448" cy="180" r="6"/><circle cx="462" cy="162" r="5"/><circle cx="408" cy="186" r="5"/></g></svg></svg>
<div class="st" style="left:28px">应用中心：<span class="a"><span class="d">127</span>.<span class="d">0</span>.<span class="d">0</span>.<span class="d">1</span>:<span class="d">7099</span></span></div>
<svg class="p" style="left:259px;top:1006px" width="19" height="19" viewBox="0 0 19 19"><defs><radialGradient id="sc" cx=".4" cy=".3" r=".8"><stop offset="0" stop-color="#7fe06a"/><stop offset="1" stop-color="#1d9a1a"/></radialGradient></defs><circle cx="9.500" cy="9.500" r="8.800" fill="url(#sc)" stroke="#157d12" stroke-width=".8"/><path d="M5 9.800l3.300 3.300 6-6.800" fill="none" stroke="#fff" stroke-width="2.600" stroke-linecap="round" stroke-linejoin="round"/></svg>
<div class="st" style="left:281px">连接状态：正常</div>
<div class="st" style="left:420px">账套：<span class="a">susan(<span class="d">2019</span></span>年第<span class="a"><span class="d">3</span></span>期<span class="a">)</span></div>
<div class="st" style="left:700px">操作员：系统管理员<span class="a">(admin)&nbsp;</span>总部</div>
<div class="ss" style="left:249px"></div>
<div class="ss" style="left:402px"></div>
<div class="ss" style="left:681px"></div>
<div class="ss" style="left:998px"></div>
<div class="ss" style="left:1712px"></div>
<svg class="p" style="left:1005px;top:985px" width="235" height="44" viewBox="0 0 235 44"><path d="M7 34C7 24 20 16 42 12 50 9 54 6 60 5.500h26c6 .5 10 4 18 5.500l30 1c30 .5 60 3 80 8 8 2 11 6 11 10v14H15C10 44 7 40 7 34z" fill="#d2d2d2"/></svg>
<div style="left:1020px;top:1005px;width:15px;height:15px;background:#c8c8c8"></div>
<div style="left:1035px;top:1005px;width:15px;height:15px;background:#b2b2b2"></div>
<div style="left:1050px;top:1005px;width:15px;height:15px;background:#b5b5b5"></div>
<div style="left:1065px;top:1005px;width:15px;height:15px;background:#aaaaaa"></div>
<div style="left:1080px;top:1005px;width:15px;height:15px;background:#aaaaaa"></div>
<div style="left:1095px;top:1005px;width:15px;height:15px;background:#a9a9a9"></div>
<div style="left:1110px;top:1005px;width:15px;height:15px;background:#b4b4b4"></div>
<div style="left:1125px;top:1005px;width:15px;height:15px;background:#a0a0a0"></div>
<div style="left:1140px;top:1005px;width:15px;height:15px;background:#e0e0e0"></div>
<div style="left:1155px;top:1005px;width:15px;height:15px;background:#c8c8c8"></div>
<div style="left:1170px;top:1005px;width:15px;height:15px;background:#c8c8c8"></div>
<div style="left:1185px;top:1005px;width:15px;height:15px;background:#d0d0d0"></div>
<div style="left:1200px;top:1005px;width:15px;height:15px;background:#c4c4c4"></div>
<div style="left:1215px;top:1005px;width:15px;height:15px;background:#e6e6e6"></div>
<div style="left:1020px;top:1020px;width:15px;height:9px;background:#d4d4d4"></div>
<div style="left:1035px;top:1020px;width:15px;height:9px;background:#dcdcdc"></div>
<div style="left:1050px;top:1020px;width:15px;height:9px;background:#dedede"></div>
<div style="left:1065px;top:1020px;width:15px;height:9px;background:#dfdfdf"></div>
<div style="left:1080px;top:1020px;width:15px;height:9px;background:#e0e0e0"></div>
<div style="left:1095px;top:1020px;width:15px;height:9px;background:#dfdfdf"></div>
<div style="left:1110px;top:1020px;width:15px;height:9px;background:#e4e4e4"></div>
<div style="left:1125px;top:1020px;width:15px;height:9px;background:#e6e6e6"></div>
<div style="left:1140px;top:1020px;width:15px;height:9px;background:#eeeeee"></div>
<div style="left:1155px;top:1020px;width:15px;height:9px;background:#eeeeee"></div>
<div style="left:1170px;top:1020px;width:15px;height:9px;background:#e4e4e4"></div>
<div style="left:1185px;top:1020px;width:15px;height:9px;background:#e8e8e8"></div>
<div style="left:1200px;top:1020px;width:15px;height:9px;background:#e0e0e0"></div>
<div style="left:1215px;top:1020px;width:15px;height:9px;background:#ececec"></div>
<div style="left:1068px;top:1010px;width:23px;height:1px;background:repeating-linear-gradient(90deg,#fff 0,#fff 2px,#777 2px,#777 3px)"></div>
<svg class="p" style="left:1726px;top:1007px" width="21" height="16" viewBox="0 0 21 16"><rect x=".7" y=".7" width="19.600" height="14.600" rx="1.500" fill="#f5faff" stroke="#5aa9e6" stroke-width="1.400"/><path d="M1.500 1.500l9 7.500 9-7.500M1.500 14.500l6.500-6M19.500 14.500l-6.500-6" fill="none" stroke="#5aa9e6" stroke-width="1.200"/></svg>
<div class="st" style="left:1752px;text-decoration:underline">消息提醒中心</div>
<div style="left:545px;top:228px;width:830px;height:574px;border:1px solid #1f1f1f;background:#b9d1ea"></div>
<div style="left:546px;top:229px;width:828px;height:37px;background:linear-gradient(180deg,#9db7d6 0%,#abc4e1 45%,#c1d6ee 100%)"></div>
<div style="left:546px;top:229px;width:828px;height:572px;border:1px solid rgba(255,255,255,.35);border-left-color:#d2e8f5;border-right-color:#3fbfe0;border-bottom:1px solid #2fb2d6;box-shadow:inset -1px -1px 0 rgba(90,195,228,.65)"></div>
<div style="left:547px;top:266px;width:8px;height:113px;background:linear-gradient(180deg,#c3d8ef 0%,#dbe8f6 100%)"></div>
<div style="left:1365px;top:266px;width:8px;height:113px;background:linear-gradient(180deg,#c3d8ef 0%,#dbe8f6 100%)"></div>
<div class="lbl" style="left:564px;top:240px;color:#000;text-shadow:0 0 4px #fff,0 0 6px #fff,0 0 8px #fff"><span style="position:static;word-spacing:1.7px">销售回款单 - 新增</span></div>
<div style="left:1324px;top:241px;width:39px;height:21px;border:1px solid #5c2018;border-radius:4px;background:linear-gradient(180deg,#e9a99a 0%,#d9705c 45%,#c5402b 50%,#cf5a3e 100%);box-shadow:inset 0 0 0 1px rgba(255,255,255,.45)"></div>
<svg class="p" style="left:1335px;top:245px" width="17" height="13" viewBox="0 0 17 13"><path d="M2 1.500h3.500L8.500 4.600l3-3.100H15L10.400 6.500 15 11.500h-3.500L8.500 8.400l-3 3.100H2l4.600-5z" fill="#fff" stroke="#6a3027" stroke-width="1" stroke-linejoin="round"/></svg>
<div style="left:555px;top:266px;width:810px;height:526px;background:#fff"></div>
<div style="left:555px;top:266px;width:810px;height:56px;background:linear-gradient(180deg,#fefefe 0%,#f4f4f4 28%,#eaeaea 34%,#e8e8e8 100%);border-bottom:1px solid #dcdcdc"></div>
<div style="left:559px;top:280px;width:2px;height:30px;background:repeating-linear-gradient(180deg,#c4c4c4 0,#c4c4c4 2px,transparent 2px,transparent 4px)"></div>
<svg class="p" style="left:591.5px;top:275.3px" width="20" height="20" viewBox="0 0 20 20"><defs><linearGradient id="gp6" x1="0" y1="0" x2="0" y2="1"><stop offset="0" stop-color="#b4ec7c"/><stop offset="1" stop-color="#62c22f"/></linearGradient></defs><path d="M2.500 10l7.500-6.500v4h7.500v5h-7.500v4z" fill="url(#gp6)" stroke="#6cc03a" stroke-width=".8" stroke-linejoin="round"/></svg><div class="lbl c" style="left:555.5px;top:296.6px;width:90px;color:#1d3b6f">上一个</div>
<svg class="p" style="left:656.7px;top:275.3px" width="20" height="20" viewBox="0 0 20 20"><defs><linearGradient id="gn7" x1="0" y1="0" x2="0" y2="1"><stop offset="0" stop-color="#8cc2f7"/><stop offset="1" stop-color="#3f86e0"/></linearGradient></defs><path d="M17.500 10l-7.500-6.500v4h-7.500v5h7.500v4z" fill="url(#gn7)" stroke="#4a8fe0" stroke-width=".8" stroke-linejoin="round"/></svg><div class="lbl c" style="left:620.7px;top:296.6px;width:90px;color:#1d3b6f">下一个</div>
<svg class="p" style="left:734.0px;top:275.3px" width="20" height="20" viewBox="0 0 20 20"><defs><radialGradient id="ga8" cx=".4" cy=".3" r=".8"><stop offset="0" stop-color="#8fe36f"/><stop offset=".6" stop-color="#3fb82f"/><stop offset="1" stop-color="#1f9418"/></radialGradient></defs><circle cx="10" cy="10" r="9.300" fill="url(#ga8)" stroke="#2a9a22" stroke-width=".8"/><path d="M10 4.500v11M4.500 10h11" stroke="#fff" stroke-width="3.200" stroke-linecap="round"/></svg><div class="lbl c" style="left:698.0px;top:296.6px;width:90px;color:#1d3b6f">新增<span class="a">(</span><u><span class="a">N</span></u><span class="a">)</span></div>
<svg class="p" style="left:810.3px;top:275.3px" width="20" height="20" viewBox="0 0 20 20"><path d="M6.500 1.500h7l3 3v9h-10z" fill="#f1f1f1" stroke="#b8b8b8" stroke-width=".9"/><path d="M2.500 5.500h7l3 3v10h-10z" fill="#f6f6f6" stroke="#b0b0b0" stroke-width=".9"/><path d="M9.500 5.500v3h3" fill="#e2e2e2" stroke="#b0b0b0" stroke-width=".8"/><path d="M4.500 11.500h6M4.500 13.500h6M4.500 15.500h6" stroke="#cfcfcf" stroke-width="1"/></svg><div class="lbl c" style="left:774.3px;top:296.6px;width:90px;color:#9c9c9c">复制新增</div>
<svg class="p" style="left:886.0px;top:275.3px" width="20" height="20" viewBox="0 0 20 20"><path d="M1.500 1.500h17v17h-15l-2-2z" fill="#5fb5f0" stroke="#3f97dc" stroke-width="1"/><rect x="5" y="1.500" width="10" height="7" fill="#f2f9ff"/><rect x="11" y="2.800" width="2.500" height="4.500" fill="#5fb5f0"/><rect x="5" y="11.500" width="10" height="7" fill="#e9f5fe"/><rect x="6.500" y="13" width="3" height="4.500" fill="#5fb5f0"/></svg><div class="lbl c" style="left:850.0px;top:296.6px;width:90px;color:#1d3b6f">保存<span class="a">(</span><u><span class="a">S</span></u><span class="a">)</span></div>
<svg class="p" style="left:971.0px;top:275.3px" width="20" height="20" viewBox="0 0 20 20"><rect x="2.500" y="3.500" width="14" height="15" rx="1.500" fill="#f4b25c" stroke="#dd9434" stroke-width=".9"/><rect x="6.500" y="1.500" width="6" height="4" rx="1" fill="#d8dde6" stroke="#9da7b8" stroke-width=".8"/><rect x="4.500" y="6.500" width="10" height="10" fill="#fffdf8" stroke="#e9c890" stroke-width=".6"/><rect x="9.500" y="10.500" width="7" height="7.500" fill="#ece6f5" stroke="#a79cc4" stroke-width=".8"/><path d="M11 13h4M11 15.500h4" stroke="#c3bad9" stroke-width=".9"/></svg><div class="lbl c" style="left:935.0px;top:296.6px;width:90px;color:#1d3b6f">附件资料</div>
<svg class="p" style="left:1060.3px;top:275.3px" width="20" height="20" viewBox="0 0 20 20"><defs><linearGradient id="gm9" x1="0" y1="0" x2="0" y2="1"><stop offset="0" stop-color="#6fb0f5"/><stop offset="1" stop-color="#2f78dc"/></linearGradient></defs><path d="M1.500 1.500l8.500 5 8.500-5v4.500l-8.500 5.500-8.500-5.500z" fill="url(#gm9)"/><path d="M1.500 9.500l8.500 5 8.500-5v4l-8.500 5.500-8.500-5.500z" fill="url(#gm9)"/></svg><div class="lbl c" style="left:1024.3px;top:296.6px;width:90px;color:#1d3b6f">更多操作</div>
<svg class="p" style="left:1150.3px;top:275.3px" width="20" height="20" viewBox="0 0 20 20"><path d="M5.500 1.500h7l2 2v5h-9z" fill="#fff" stroke="#b3bccb" stroke-width=".9"/><path d="M7 4.500h5M7 6.500h5" stroke="#a8c8ee" stroke-width="1"/><rect x="1.500" y="8" width="17" height="7" rx="1.500" fill="#e1e1e1" stroke="#aaa" stroke-width=".9"/><rect x="1.500" y="8" width="17" height="2.500" rx="1.200" fill="#f3f3f3"/><rect x="4.500" y="13" width="11" height="5.500" fill="#fdfdfd" stroke="#b5b5b5" stroke-width=".9"/><path d="M6 15.500h8" stroke="#d0d0d0" stroke-width="1"/></svg><div class="lbl c" style="left:1114.3px;top:296.6px;width:90px;color:#1d3b6f">打印</div>
<svg class="p" style="left:1236.0px;top:275.3px" width="20" height="20" viewBox="0 0 20 20"><defs><linearGradient id="gx10" x1="0" y1="0" x2="0" y2="1"><stop offset="0" stop-color="#f47a62"/><stop offset="1" stop-color="#d93a22"/></linearGradient></defs><rect x="1.500" y="1.500" width="17" height="17" rx="1.500" fill="url(#gx10)" stroke="#c7321c"/><path d="M5.500 5.500l9 9M14.500 5.500l-9 9" stroke="#fff" stroke-width="3.400" stroke-linecap="butt"/></svg><div class="lbl c" style="left:1200.0px;top:296.6px;width:90px;color:#1d3b6f">关闭<span class="a">(</span><u><span class="a">Q</span></u><span class="a">)</span></div>
<div class="sep" style="left:702px;top:270px;height:46px"></div>
<div class="sep" style="left:936px;top:270px;height:46px"></div>
<div class="sep" style="left:1025px;top:270px;height:46px"></div>
<div class="sep" style="left:1130px;top:270px;height:46px"></div>
<div class="sep" style="left:1205px;top:270px;height:46px"></div>
<div class="arr" style="left:1112.7px;top:291px;border-top-color:#1d3b6f"></div>
<div class="arr" style="left:1187.7px;top:291px;border-top-color:#1d3b6f"></div>
<div class="lbl" style="left:623px;top:347.0px;color:#000">回款日期</div>
<div class="fld" style="left:710.0px;top:347.0px;width:195.0px;height:22px"><div class="v" style=""><span class="a"><span class="d">2019</span>-<span class="d">03</span>-<span class="d">07</span>&nbsp;<span class="d">18</span>:<span class="d">47</span>:<span class="d">30</span></span></div><div class="btn" style="height:20px"><div class="arr" style="left:6px;top:8px;border-top-color:#000"></div></div></div>
<div class="lbl" style="left:1003px;top:347.0px;color:#000">回款单号</div>
<div class="fld y" style="left:1099.0px;top:347.0px;width:194.0px;height:22px"><div class="btn"><svg class="p" style="left:4px;top:9px" width="13" height="3" viewBox="0 0 13 3"><rect x="0" y="0" width="3" height="2.500" fill="#000"/><rect x="5" y="0" width="3" height="2.500" fill="#000"/><rect x="10" y="0" width="3" height="2.500" fill="#000"/></svg></div></div>
<div style="left:595px;top:384px;width:723px;height:2px;background:linear-gradient(180deg,#bcbcbc 0,#bcbcbc 1px,#e6e6e6 1px,#e6e6e6 2px)"></div>
<div class="lbl" style="left:623px;top:403.5px;color:#000">业务员</div>
<div class="fld" style="left:710.0px;top:403.0px;width:195.0px;height:22px"><div class="btn"><svg class="p" style="left:4px;top:9px" width="13" height="3" viewBox="0 0 13 3"><rect x="0" y="0" width="3" height="2.500" fill="#000"/><rect x="5" y="0" width="3" height="2.500" fill="#000"/><rect x="10" y="0" width="3" height="2.500" fill="#000"/></svg></div></div>
<div class="lbl" style="left:1003px;top:403.5px;color:#000">部门</div>
<div class="fld" style="left:1099.0px;top:403.0px;width:194.0px;height:22px"><div class="btn"><svg class="p" style="left:4px;top:9px" width="13" height="3" viewBox="0 0 13 3"><rect x="0" y="0" width="3" height="2.500" fill="#000"/><rect x="5" y="0" width="3" height="2.500" fill="#000"/><rect x="10" y="0" width="3" height="2.500" fill="#000"/></svg></div></div>
<div class="lbl" style="left:623px;top:449.0px;color:#000">收款类型</div>
<div class="fld" style="left:710.0px;top:448.0px;width:195.0px;height:23px"><div class="v" style=""><span class="cj" style="margin-left:0">销售回款</span></div><div class="btn" style="height:21px"><div class="arr" style="left:6px;top:8px;border-top-color:#000"></div></div></div>
<div style="left:917px;top:451px;width:16px;height:16px;border:1px solid #8e8f8f;background:linear-gradient(135deg,#e4e4e4 0%,#f6f6f6 100%);box-shadow:inset 0 0 0 2px #f4f4f4,inset 0 0 0 3px #c4c4c4"></div>
<div class="lbl" style="left:938px;top:448.5px;color:#000">代收款</div>
<div class="lbl" style="left:1003px;top:449.0px;color:#0000ff">收款账户</div>
<div class="fld" style="left:1099.0px;top:448.0px;width:194.0px;height:22px"><div class="btn"><svg class="p" style="left:4px;top:9px" width="13" height="3" viewBox="0 0 13 3"><rect x="0" y="0" width="3" height="2.500" fill="#000"/><rect x="5" y="0" width="3" height="2.500" fill="#000"/><rect x="10" y="0" width="3" height="2.500" fill="#000"/></svg></div></div>
<div class="lbl" style="left:623px;top:494.5px;color:#000">收款金额</div>
<div class="fld" style="left:710.0px;top:494.0px;width:195.0px;height:23px"><div class="btn" style="height:21px"><div class="arr" style="left:6px;top:8px;border-top-color:#000"></div></div></div>
<div style="left:917px;top:497px;width:16px;height:16px;border:1px solid #8e8f8f;background:linear-gradient(135deg,#e4e4e4 0%,#f6f6f6 100%);box-shadow:inset 0 0 0 2px #f4f4f4,inset 0 0 0 3px #c4c4c4"></div>
<div class="lbl" style="left:938px;top:494.5px;color:#1a8a1a">预付款</div>
<div class="lbl" style="left:1003px;top:494.5px;color:#000">手续费<span class="a">/</span>优惠</div>
<div class="fld" style="left:1099.0px;top:494.0px;width:194.0px;height:23px"><div class="v" style=""><span class="a"><span class="d">0</span></span></div><div class="btn" style="height:21px"><div class="arr" style="left:6px;top:8px;border-top-color:#000"></div></div></div>
<div class="lbl" style="left:623px;top:540.0px;color:#000">可结算金额</div>
<div class="fld y" style="left:710.0px;top:539.0px;width:195.0px;height:23px"><div class="v" style=""><span class="a"><span class="d">0</span></span></div><div class="btn" style="height:21px"><div class="arr" style="left:6px;top:8px;border-top-color:#000"></div></div></div>
<svg class="p" style="left:913px;top:540px" width="16" height="21" viewBox="0 0 16 21"><path d="M8 1C4 1 1.500 3.800 1.500 7.200c0 2.300 1.300 3.800 2.300 5.100.7.900 1 1.700 1.200 2.700h6c.2-1 .5-1.800 1.200-2.700 1-1.300 2.300-2.800 2.300-5.100C14.500 3.800 12 1 8 1z" fill="#fff6b8" stroke="#e2a90f" stroke-width="1.700"/><path d="M5.500 6.500c.3-1.500 1.300-2.500 2.800-2.800" fill="none" stroke="#fff" stroke-width="1.200" stroke-linecap="round"/><rect x="5.200" y="15.500" width="5.600" height="3.600" rx=".8" fill="#b9b9b9" stroke="#8c8c8c" stroke-width=".7"/><path d="M6.500 20h3" stroke="#777" stroke-width="1.200"/></svg>
<div class="lbl" style="left:623px;top:584.5px;color:#000">客户名称</div>
<div class="fld" style="left:710.0px;top:585.0px;width:159.0px;height:22px"><div class="btn"><svg class="p" style="left:4px;top:9px" width="13" height="3" viewBox="0 0 13 3"><rect x="0" y="0" width="3" height="2.500" fill="#000"/><rect x="5" y="0" width="3" height="2.500" fill="#000"/><rect x="10" y="0" width="3" height="2.500" fill="#000"/></svg></div></div>
<div class="lbl" style="left:892px;top:584.5px;color:#000">物流快递</div>
<div class="fld y" style="left:960.0px;top:585.0px;width:121.0px;height:22px"></div>
<div class="lbl" style="left:623px;top:630.0px;color:#000">单据状态</div>
<div class="fld y" style="left:710.0px;top:630.0px;width:159.0px;height:22px"><div class="v" style=""><span class="cj" style="margin-left:25.5px">待审核</span></div><div class="btn" style="height:20px"><div class="arr" style="left:6px;top:8px;border-top-color:#000"></div></div></div>
<svg class="p" style="left:715px;top:632px" width="18" height="18" viewBox="0 0 18 18"><defs><linearGradient id="rb" x1="0" y1="0" x2="0" y2="1"><stop offset="0" stop-color="#ffffff"/><stop offset=".5" stop-color="#f0f0f0"/><stop offset=".55" stop-color="#dadada"/><stop offset="1" stop-color="#ececec"/></linearGradient></defs><circle cx="9" cy="9" r="8" fill="url(#rb)" stroke="#b5b5b5" stroke-width="1.200"/></svg>
<div class="lbl" style="left:892px;top:630.0px;color:#000">备注</div>
<div class="fld" style="left:960.0px;top:630.0px;width:333.0px;height:22px"></div>
<div class="lbl" style="left:623px;top:676.5px;color:#000">已结算金额</div>
<div class="fld y" style="left:710.0px;top:676.0px;width:159.0px;height:23px"><div class="v" style=""><span class="a"><span class="d">0</span></span></div><div class="btn" style="height:21px"><div class="arr" style="left:6px;top:8px;border-top-color:#000"></div></div></div>
<div class="lbl" style="left:892px;top:676.5px;color:#000">结算余额</div>
<div class="fld y" style="left:960.0px;top:676.0px;width:121.0px;height:23px"><div class="v" style=""><span class="a"><span class="d">0</span></span></div><div class="btn" style="height:21px"><div class="arr" style="left:6px;top:8px;border-top-color:#000"></div></div></div>
<div class="lbl" style="left:1101px;top:676.5px;color:#000">结算状态</div>
<div class="fld y" style="left:1172.0px;top:676.0px;width:121.0px;height:23px"><div class="v" style=""><span class="cj" style="margin-left:25.5px">未结算</span></div><div class="btn" style="height:21px"><div class="arr" style="left:6px;top:8px;border-top-color:#000"></div></div></div>
<svg class="p" style="left:1178px;top:679px" width="17" height="16" viewBox="0 0 17 16"><path d="M2.200 1v14.500" stroke="#c98a3a" stroke-width="1.600"/><path d="M3.500 2c2.500-1.200 4 .8 6.500.3 1.700-.3 3-.8 4.500-.3v7.500c-1.500-.5-2.800 0-4.500.3C7.500 10.300 6 8.300 3.500 9.500z" fill="#1f5fe0" stroke="#1a3fa8" stroke-width=".6"/><path d="M4.500 3c1.500-.5 3 .5 4.500.5" fill="none" stroke="#7aa5f5" stroke-width="1"/></svg>
<div style="left:595px;top:714px;width:723px;height:2px;background:linear-gradient(180deg,#bcbcbc 0,#bcbcbc 1px,#e6e6e6 1px,#e6e6e6 2px)"></div>
<div class="lbl" style="left:623px;top:733.0px;color:#000">录入日期</div>
<div class="fld y" style="left:710.0px;top:732.0px;width:195.0px;height:23px"><div class="v" style="color:#9a9a9a"><span class="a"><span class="d">2019</span>-<span class="d">03</span>-<span class="d">07</span>&nbsp;<span class="d">18</span>:<span class="d">47</span></span></div><div class="btn" style="height:21px"><div class="arr" style="left:6px;top:8px;border-top-color:#8a8a8a"></div></div></div>
<div class="lbl" style="left:1003px;top:733.0px;color:#000">录入人</div>
<div class="fld y" style="left:1099.0px;top:732.0px;width:194.0px;height:22px"><div class="v" style="color:#9a9a9a"><span style="position:static;margin-left:-1px">系统管理员</span></div></div>
</body></html>
